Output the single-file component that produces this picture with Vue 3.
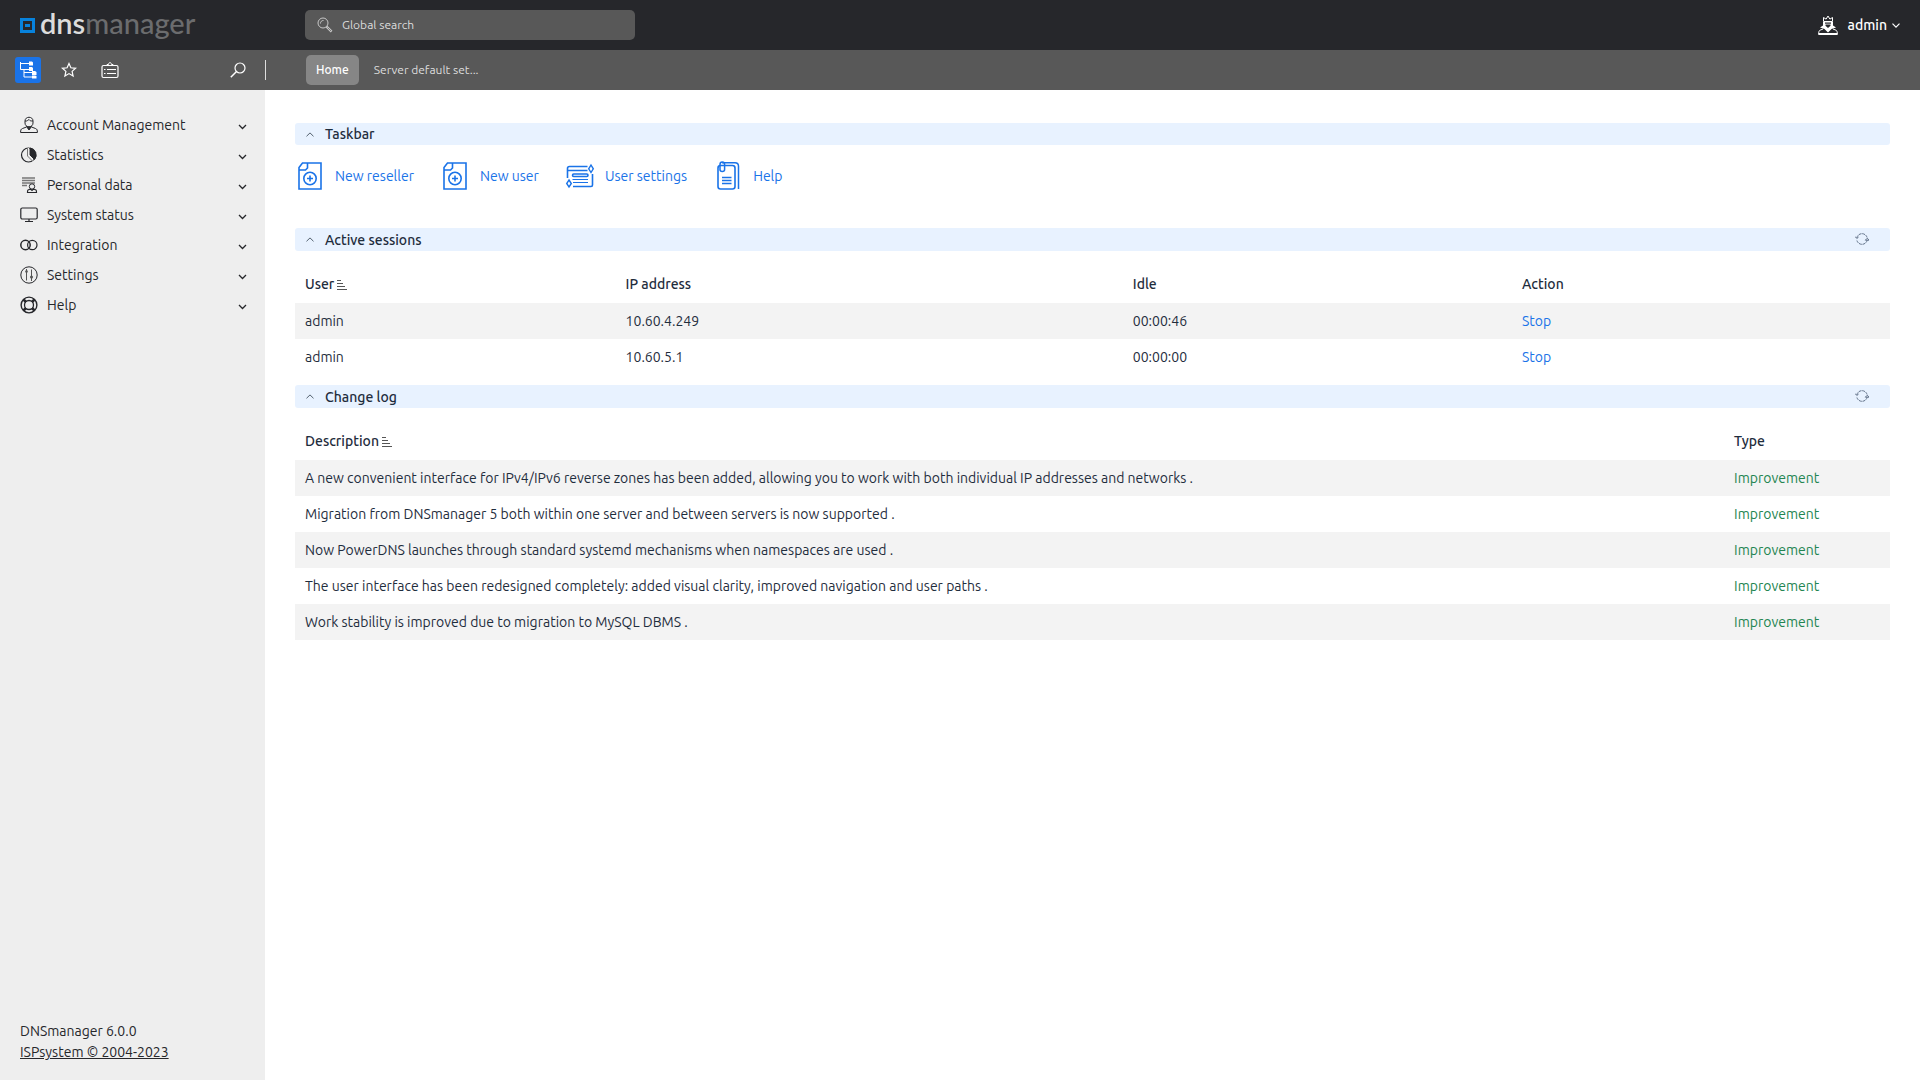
<template>
  <div class="app">
    <header class="topbar">
      <a href="#" class="logo" aria-label="dnsmanager">
        <svg width="15" height="15" viewBox="0 0 15 15">
          <rect x="1.5" y="1.5" width="12" height="12" fill="none" stroke="#0782dc" stroke-width="3" />
          <rect x="5" y="6" width="5" height="3" fill="#0782dc" />
        </svg>
        <span class="logo-text"><b>dns</b>manager</span>
      </a>
      <label class="search">
        <svg width="16" height="16" viewBox="0 0 16 16" fill="none" stroke="#c8c8c8">
          <circle cx="6" cy="6" r="5" />
          <path d="M3.5 6.5a2.8 2.8 0 0 1 3-3" />
          <path d="M9.6 9.6l5 5" stroke-width="2.4" />
          <path d="M10.5 10.5l3.6 3.6" stroke="#585858" stroke-width="0.7" />
        </svg>
        <input v-model="query" type="text" placeholder="Global search" aria-label="Global search" />
      </label>
      <button class="user">
        <svg width="20" height="20" viewBox="0 0 20 20" fill="none" stroke="#fff">
          <path d="M5.5 6.5V2.5l2.6 1.6L10 1l1.900 3.100 2.600-1.600v4z" />
          <path d="M5 7v3.500l-3 2 4.500 1.500L10 17.500l3.500-3.500 4.500-1.500-3-2V7z" fill="#fff" stroke="none" />
          <path d="M7 7.500h6v1.200H7z" fill="#26272b" stroke="none" />
          <path d="M7.500 9.500h5v1.200L10 13l-2.500-2.300z" fill="#26272b" stroke="none" />
          <path d="M5 14l-3 1.200c-1 .5-1.400 1.800-1.400 4.300h18.800c0-2.500-.4-3.800-1.400-4.300L15 14" />
          <path d="M1 18.500h18" />
        </svg>
        <span>admin</span>
        <svg width="8" height="5" viewBox="0 0 8 5" fill="none" stroke="#fff" stroke-width="1.200"><path d="M.5 .6L4 4.100 7.500 .6" /></svg>
      </button>
    </header>

    <nav class="toolbar">
      <div class="tools">
        <button class="tool active" aria-label="Menu">
          <svg width="18" height="18" viewBox="0 0 18 18" fill="none" stroke="#fff">
            <path d="M1.500 1v7.500h9M1 2.500h10M5 8.500V16h8M5 11.500h8" />
            <path d="M10 .5h3l1 1v3h-4zM10 6h3l1 1v3h-4zM13 10h3l1.500 1v3H13zM13 14.500h3l1.500 .5v2.500H13z" fill="#fff" stroke="none" />
          </svg>
        </button>
        <button class="tool" aria-label="Favorites">
          <svg width="16" height="16" viewBox="0 0 16 16" fill="none" stroke="#fff" stroke-width="1.200">
            <path d="M8 1.500l1.900 4.300 4.700.5-3.500 3.100 1 4.600L8 11.600 3.900 14l1-4.600L1.400 6.300l4.700-.5z" />
          </svg>
        </button>
        <button class="tool" aria-label="Tasks">
          <svg width="18" height="18" viewBox="0 0 18 18" fill="none" stroke="#fff">
            <rect x="1" y="4.500" width="16" height="12" rx="1.500" stroke-width="1.200" />
            <path d="M6 4.500v-1h1.500c0-2.500 3-2.500 3 0H12v1M3 8.500h1.500M6 8.500h9M3 12.500h1.500M6 12.500h9" />
          </svg>
        </button>
        <button class="tool tool-search" aria-label="Search menu">
          <svg width="16" height="16" viewBox="0 0 16 16" fill="none" stroke="#fff" stroke-width="1.200">
            <circle cx="10" cy="6" r="5" />
            <path d="M6.500 9.500L.8 15.200" stroke-width="1.500" />
          </svg>
        </button>
      </div>
      <div class="tabs">
        <button
          v-for="tab in tabs"
          :key="tab"
          :class="['tab', { active: tab === activeTab }]"
          @click="activeTab = tab"
        >{{ tab }}</button>
      </div>
    </nav>

    <div class="body">
      <aside class="sidebar">
        <ul class="menu">
          <li v-for="item in menu" :key="item.title">
            <button class="menu-item">
              <svg width="18" height="18" viewBox="0 0 18 18" fill="none" stroke="#26272b" v-html="item.icon"></svg>
              <span>{{ item.title }}</span>
              <svg class="chevron" width="9" height="6" viewBox="0 0 9 6" fill="none" stroke="#26272b" stroke-width="1.300"><path d="M1 1l3.500 3.500L8 1" /></svg>
            </button>
          </li>
        </ul>
        <footer class="version">
          <div>DNSmanager 6.0.0</div>
          <a href="#">ISPsystem © 2004-2023</a>
        </footer>
      </aside>

      <main class="content">
        <section class="taskbar">
          <h2 class="panel-title">
            <button class="collapse"><svg width="8" height="5" viewBox="0 0 8 5" fill="none" stroke="#52606e"><path d="M.5 4.300L4 .9l3.500 3.400" /></svg>Taskbar</button>
          </h2>
          <div class="tasks">
            <a v-for="task in tasks" :key="task.title" href="#" class="task">
              <svg width="30" height="30" viewBox="0 0 30 30" fill="none" stroke="#1a73e8" stroke-width="1.600" v-html="task.icon"></svg>
              <span>{{ task.title }}</span>
            </a>
          </div>
        </section>

        <section v-for="panel in panels" :key="panel.title" class="panel">
          <h2 class="panel-title">
            <button class="collapse"><svg width="8" height="5" viewBox="0 0 8 5" fill="none" stroke="#52606e"><path d="M.5 4.300L4 .9l3.500 3.400" /></svg>{{ panel.title }}</button>
            <button class="refresh" :aria-label="'Refresh ' + panel.title">
              <svg width="14" height="14" viewBox="0 0 14 14" fill="none" stroke="#64748b">
                <path d="M1.800 6a5.300 5.300 0 0 1 10.300-.5M12.200 8a5.300 5.300 0 0 1-10.300.5" stroke-dasharray="3 0.7" />
                <path d="M0 4.500l1.800 2 1.800-1.500M10.300 8.200l2-2 1.700 2z" />
              </svg>
            </button>
          </h2>
          <table :class="['data-table', panel.kind]">
            <thead>
              <tr>
                <th v-for="(col, i) in panel.columns" :key="col">
                  <button v-if="i === 0" class="sort">{{ col }}<svg width="10" height="11" viewBox="0 0 10 11" stroke="#555"><path d="M0 1.500h4M0 4.500h6M0 7.500h8M0 10.500h10" /></svg></button>
                  <template v-else>{{ col }}</template>
                </th>
              </tr>
            </thead>
            <tbody>
              <tr v-for="(row, r) in panel.rows" :key="r">
                <td v-for="(cell, c) in row" :key="c">
                  <a v-if="cell === 'Stop'" href="#" class="stop">{{ cell }}</a>
                  <span v-else :class="{ good: cell === 'Improvement' }">{{ cell }}</span>
                </td>
              </tr>
            </tbody>
          </table>
        </section>
      </main>
    </div>
  </div>
</template>

<script setup>
import { ref } from 'vue';

const query = ref('');
const tabs = ['Home', 'Server default set...'];
const activeTab = ref('Home');

const menu = [
  {
    title: 'Account Management',
    icon: '<path d="M5 5c0-5 8-5 8 0v2c0 5-8 5-8 0zM5 5c2 .5 3-1 4-1.500 1 1.500 2 1.500 4 1.500M6.500 11l-4 1.500C1 13 .6 14 .6 16.500h16.800c0-2.500-.4-3.500-1.900-4l-4-1.500"/><path d="M6.500 10.500L9 14l2.500-3.500L9 11.500z" fill="#26272b"/>',
  },
  {
    title: 'Statistics',
    icon: '<circle cx="8.500" cy="9" r="7" stroke-width="1.200"/><path d="M10 2a7 7 0 0 1 4.500 11.500L10 9z" fill="#26272b"/><path d="M8.300 2v7.500l4.700 4.700" stroke="#eee" stroke-width="1.500"/><path d="M7.500 2v8l4.500 4.500" stroke="#777"/>',
  },
  {
    title: 'Personal data',
    icon: '<path d="M2 2h13M2 4.500h13M2 7h13M2 9.500h5" stroke="#777" stroke-width="1.500"/><circle cx="12" cy="10.500" r="2.700" fill="#eee"/><path d="M10.500 13l-2.500 1c-.5.3-.5 1-.5 2.500h9c0-1.500 0-2.200-.5-2.500l-2.500-1M10.500 13l1.500 1.500 1.500-1.500" stroke-width="1.200"/>',
  },
  {
    title: 'System status',
    icon: '<rect x=".8" y="2" width="16.400" height="11" rx="1.500" stroke-width="1.200"/><path d="M9 13v2.500M5 15.500h8" stroke-width="1.200"/>',
  },
  {
    title: 'Integration',
    icon: '<circle cx="5.500" cy="9" r="4.700" stroke-width="1.500"/><circle cx="12.300" cy="9" r="4.700" stroke-width="1.200"/>',
  },
  {
    title: 'Settings',
    icon: '<circle cx="9" cy="9" r="8.200"/><path d="M6.500 3v11.500M11.500 3.500V15" stroke="#555"/><circle cx="6.500" cy="5.500" r="1.300" fill="#555" stroke="none"/><circle cx="11.500" cy="11" r="1.500" fill="#555" stroke="none"/>',
  },
  {
    title: 'Help',
    icon: '<circle cx="9" cy="9" r="7.900" stroke-width="1.400"/><circle cx="9" cy="9" r="4.500" stroke-width="1.300"/><path d="M3.500 3.500L6 6M14.500 3.500L12 6M3.500 14.500L6 12M14.500 14.500L12 12" stroke-width="2.600"/>',
  },
];

const addIcon = '<path d="M4 9V6.500L7.500 2H26v26H4V9h6.500l2-2V2"/><circle cx="15" cy="17.500" r="6.200"/><path d="M15 14.500v6M12 17.500h6"/>';

const tasks = [
  { title: 'New reseller', icon: addIcon },
  { title: 'New user', icon: addIcon },
  {
    title: 'User settings',
    icon: '<path d="M2.500 17V7.500q0-2 2-2H22.500M3 9.500h19.500M8 25.500h18q1.500 0 1.500-1.500V13"/><rect x="7.500" y="13" width="15.500" height="2.500" rx="1.200"/><path d="M7.500 18.500h15.500M8 21.500h15" stroke-width="1.200"/><path d="M26 4l2.300 3.800L26 11.500l-2.300-3.700zM4 19l2.300 3.500L4 26l-2.300-3.500z" stroke-width="1.400" fill="#fff"/>',
  },
  {
    title: 'Help',
    icon: '<rect x="5" y="4.500" width="17" height="23.500" rx="2.500"/><path d="M9 1.800h13q3.500 0 3.500 3.500V28" stroke-width="1.500"/><path d="M7 9V3.500q0-2.500 2.300-2.500t2.300 2.500v5q0 2-2.300 2T7 8.500" stroke-width="1.500"/><path d="M9 16.500h9.500M9 19.500h9.500M9 22.500h9.500" stroke-width="1.500"/>',
  },
];

const panels = [
  {
    title: 'Active sessions',
    kind: 'sessions',
    columns: ['User', 'IP address', 'Idle', 'Action'],
    rows: [
      ['admin', '10.60.4.249', '00:00:46', 'Stop'],
      ['admin', '10.60.5.1', '00:00:00', 'Stop'],
    ],
  },
  {
    title: 'Change log',
    kind: 'changes',
    columns: ['Description', 'Type'],
    rows: [
      ['A new convenient interface for IPv4/IPv6 reverse zones has been added, allowing you to work with both individual IP addresses and networks .', 'Improvement'],
      ['Migration from DNSmanager 5 both within one server and between servers is now supported .', 'Improvement'],
      ['Now PowerDNS launches through standard systemd mechanisms when namespaces are used .', 'Improvement'],
      ['The user interface has been redesigned completely: added visual clarity, improved navigation and user paths .', 'Improvement'],
      ['Work stability is improved due to migration to MySQL DBMS .', 'Improvement'],
    ],
  },
];
</script>

<style>
body { margin: 0; background: #fff; }
</style>

<style scoped>
.app { min-height: 100vh; display: flex; flex-direction: column; font-family: Ubuntu, 'Noto Sans', sans-serif; font-size: 14px; line-height: 20px; color: #1f2d3d; }
.app * { box-sizing: border-box; }
button { padding: 0; border: none; background: transparent; font: inherit; color: inherit; cursor: pointer; }
a { color: inherit; text-decoration: none; }
svg { flex: none; display: block; }

.topbar { display: flex; align-items: center; height: 50px; padding: 0 20px; background: #26272b; color: #fff; }
.logo { display: flex; align-items: center; gap: 5px; width: 285px; }
.logo-text { font-family: Lato, sans-serif; font-size: 29px; line-height: 40px; font-weight: 500; color: #6b6c6e; padding-bottom: 4px; }
.logo-text b { font-weight: 600; color: #dcdcdc; }
.search { display: flex; align-items: center; gap: 9px; width: 330px; height: 30px; padding: 0 12px; border-radius: 5px; background: #585858; }
.search input { flex: 1; padding: 0; border: none; outline: none; background: transparent; font: inherit; font-size: 12px; color: #ddd; }
.search input::placeholder { color: #ddd; opacity: 1; }
.user { display: flex; align-items: center; gap: 5px; margin-left: auto; font-weight: 500; }
.user span { margin-left: 5px; }

.toolbar { display: flex; align-items: center; height: 40px; background: #585858; color: #ddd; }
.tools { display: flex; align-items: center; gap: 15px; width: 266px; height: 20px; padding: 0 14px 0 15px; border-right: 1px solid #ddd; }
.tool { display: flex; align-items: center; justify-content: center; width: 26px; height: 26px; border-radius: 3px; }
.tool.active { background: #1a73e8; }
.tool-search { margin-left: auto; }
.tabs { display: flex; gap: 5px; margin-left: 40px; font-size: 12px; }
.tab { height: 30px; padding: 0 10px; border-radius: 5px; }
.tab.active { background: #868686; color: #fff; font-weight: 500; }

.body { flex: 1; display: flex; }
.sidebar { flex: none; display: flex; flex-direction: column; justify-content: space-between; width: 265px; padding: 20px 0 17px; background: #eee; color: #26272b; }
.menu { margin: 0; padding: 0; list-style: none; }
.menu-item { display: flex; align-items: center; gap: 9px; width: 100%; height: 30px; padding: 0 18px 0 20px; }
.chevron { margin-top: 3px; margin-left: auto; }
.version { padding: 0 20px; line-height: 21px; }
.version a { text-decoration: underline; }

.content { flex: 1; padding: 33px 30px; }
.taskbar { margin-bottom: 37px; }
.taskbar .panel-title { height: 22px; }
.panel { margin-bottom: 10px; }
.panel-title { display: flex; justify-content: space-between; align-items: center; height: 23px; margin: 0; padding: 0 21px 0 11px; border-radius: 3px; background: #e8f2ff; font-size: 14px; font-weight: 500; }
.collapse { display: flex; align-items: center; gap: 11px; }
.refresh { padding-bottom: 2px; }
.tasks { display: flex; gap: 26px; padding-top: 16px; color: #1a73e8; }
.task { display: flex; align-items: center; gap: 10px; }

.data-table { width: 100%; margin-top: 16px; border-collapse: collapse; table-layout: fixed; }
.data-table th, .data-table td { height: 36px; padding: 0 10px; text-align: left; font-weight: 400; }
.data-table th { padding-bottom: 2px; font-weight: 500; }
.data-table tbody tr:nth-child(odd) { background: #f3f3f3; }
.sessions th:nth-child(1) { width: 20.1%; }
.sessions th:nth-child(2) { width: 31.8%; }
.sessions th:nth-child(3) { width: 24.4%; }
.changes th:nth-child(1) { width: 89.6%; }
.sort { display: flex; align-items: center; gap: 3px; }
.stop { color: #1a73e8; }
.good { color: #238551; }
</style>
